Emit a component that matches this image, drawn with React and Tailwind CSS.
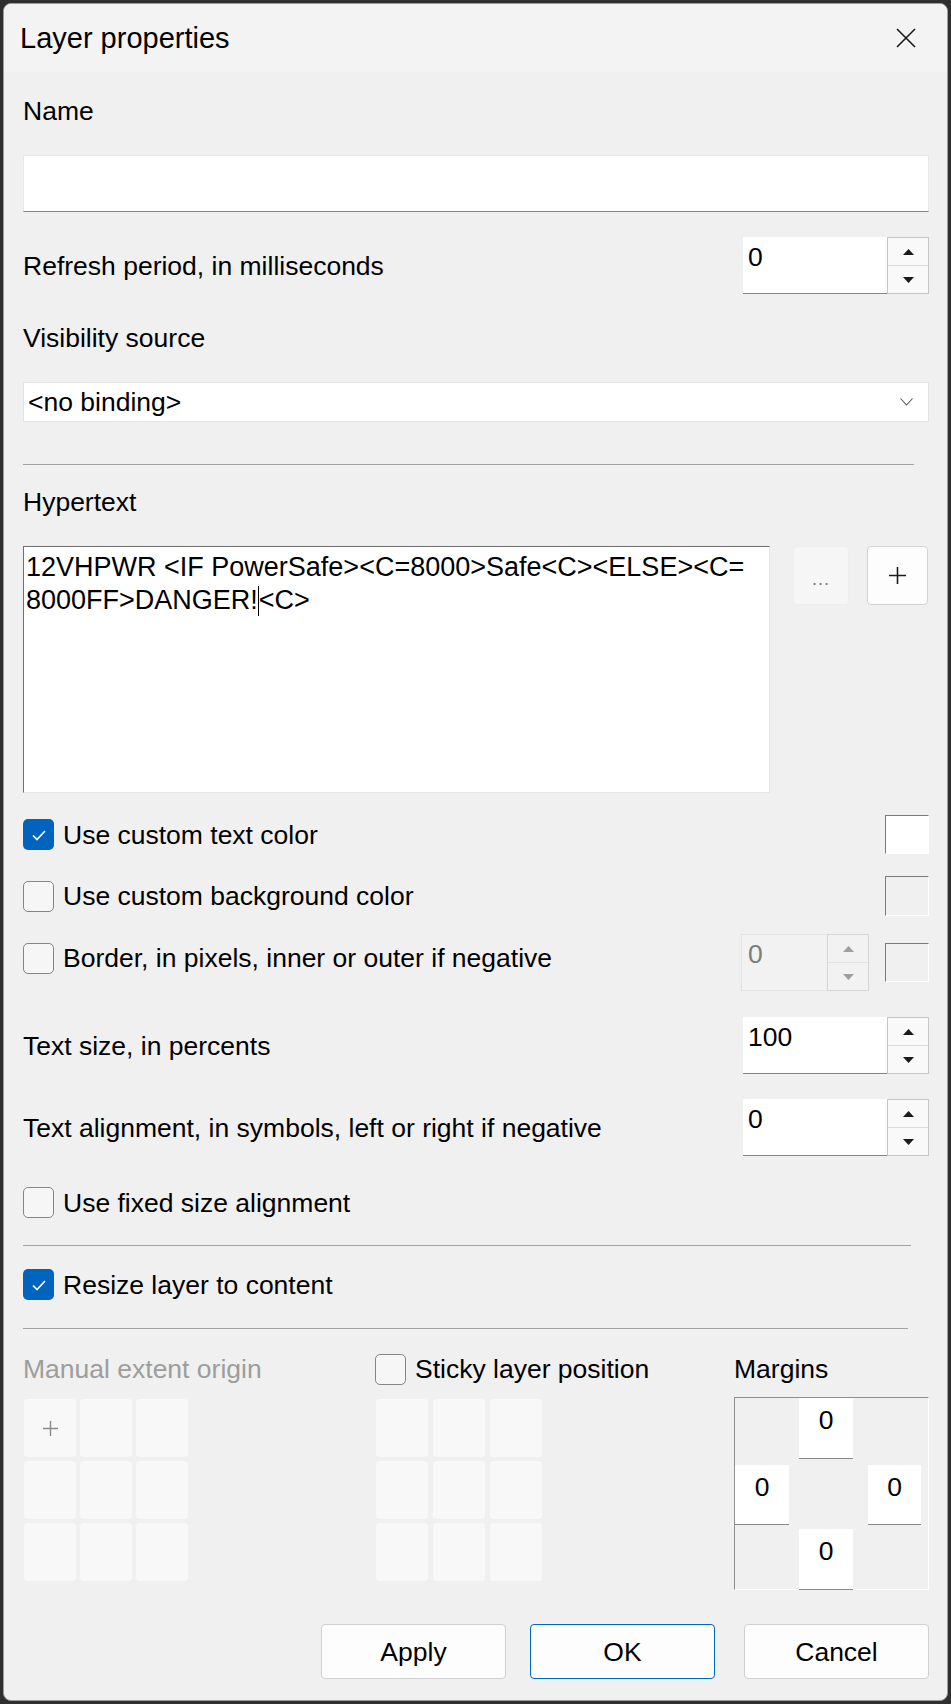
import React from 'react';

const Tri = ({ down, color = '#1a1a1a' }) => (
  <svg width="11" height="6" viewBox="0 0 11 6">
    <path d={down ? 'M0 0h11L5.5 6z' : 'M0 6h11L5.5 0z'} fill={color} />
  </svg>
);

const Spin = ({ value, disabled, inputW = 144 }) => (
  <div className="flex h-[57px]">
    <div
      style={{ width: inputW }}
      className={
        disabled
          ? 'pl-[6px] pt-[3px] leading-[32px] bg-[#f2f2f2] border border-[#e3e3e3] border-r-0 text-[#7d7d7d]'
          : 'pl-[5px] pt-[4px] leading-[32px] bg-white border-b border-[#868686]'
      }
    >
      {value}
    </div>
    <div className={`w-[42px] flex flex-col border ${disabled ? 'border-[#d6d6d6]' : 'border-[#c6c6c6]'}`}>
      <div className={`flex-1 flex items-center justify-center border-b ${disabled ? 'bg-[#f2f2f2] border-[#e2e2e2]' : 'bg-[#f9f9f9] border-[#dadada]'}`}>
        <Tri color={disabled ? '#9e9e9e' : '#1a1a1a'} />
      </div>
      <div className={`flex-1 flex items-center justify-center ${disabled ? 'bg-[#f2f2f2]' : 'bg-[#f9f9f9]'}`}>
        <Tri down color={disabled ? '#9e9e9e' : '#1a1a1a'} />
      </div>
    </div>
  </div>
);

const Check = ({ checked }) =>
  checked ? (
    <div className="w-[31px] h-[31px] shrink-0 rounded-[5px] bg-[#0063bd] flex items-center justify-center">
      <svg width="16" height="12" viewBox="0 0 16 12">
        <path d="M2 6.5l4 4L14 2" fill="none" stroke="white" strokeWidth="1.6" />
      </svg>
    </div>
  ) : (
    <div className="w-[31px] h-[31px] shrink-0 rounded-[5px] border border-[#858585] bg-[#f6f6f6]" />
  );

const CheckRow = ({ checked, label, className = '' }) => (
  <div className={`flex items-center gap-[9px] ${className}`}>
    <Check checked={checked} />
    <span className="leading-[32px]">{label}</span>
  </div>
);

const Swatch = ({ white, h = 39 }) => (
  <div
    style={{ height: h }}
    className={`w-[44px] border-t border-l border-[#7a7a7a] border-b border-r border-b-white border-r-white ${white ? 'bg-white' : 'bg-[#f0f0f0]'}`}
  />
);

const Cell = ({ children }) => (
  <div className="w-[52px] h-[58px] rounded-[4px] bg-[#f8f8f8] flex items-center justify-center text-[#8a8a8a]">
    {children}
  </div>
);

const MarginBox = () => (
  <div className="w-[54px] h-[61px] bg-white border-b border-[#8a8a8a] text-center pt-[6px] leading-[32px]">0</div>
);

export default function App() {
  return (
    <div className="w-[951px] h-[1704px] bg-[#2f2f2f] p-[3px] font-['Liberation_Sans',Arial,sans-serif] text-[26.5px] text-black">
      <div className="h-[1698px] rounded-[8px] border border-[#9c9c9c] bg-[#f0f0f0] overflow-hidden flex flex-col">
        {/* title bar */}
        <div className="h-[68px] shrink-0 bg-[#f3f3f3] flex items-center justify-between pl-[16px] pr-[31px]">
          <span className="text-[29px] leading-[36px]">Layer properties</span>
          <svg width="20" height="20" viewBox="0 0 20 20">
            <path d="M1 1l18 18M19 1L1 19" stroke="#1a1a1a" strokeWidth="1.6" />
          </svg>
        </div>

        <div className="flex-1 pl-[19px] pr-[18px] pt-[23px] flex flex-col">
          <div className="leading-[32px]">Name</div>
          <div className="mt-[28px] h-[57px] bg-white border border-[#e6e6e6] border-b-[#868686]" />

          <div className="mt-[25px] flex items-center justify-between">
            <span className="leading-[32px]">Refresh period, in milliseconds</span>
            <Spin value="0" />
          </div>

          <div className="mt-[28px] leading-[32px]">Visibility source</div>
          <div className="mt-[28px] h-[40px] bg-white border border-[#e3e3e3] flex items-center justify-between pl-[4px] pr-[15px]">
            <span className="leading-[32px]">&lt;no binding&gt;</span>
            <svg width="13" height="8" viewBox="0 0 13 8">
              <path d="M0.5 0.5l6 6.5 6-6.5" fill="none" stroke="#555" strokeWidth="1.1" />
            </svg>
          </div>

          <div className="mt-[42px] h-px bg-[#a3a3a3] mr-[15px]" />

          <div className="mt-[21px] leading-[32px]">Hypertext</div>
          <div className="mt-[28px] flex">
            <div className="w-[747px] h-[247px] bg-white border-t border-l border-[#6f6f6f] border-r border-b border-r-[#e6e6e6] border-b-[#e6e6e6] pl-[2px] pt-[4px] text-[27px] leading-[33px]">
              <div>12VHPWR &lt;IF PowerSafe&gt;&lt;C=8000&gt;Safe&lt;C&gt;&lt;ELSE&gt;&lt;C=</div>
              <div className="flex items-center">
                <span>8000FF&gt;DANGER!</span>
                <span className="w-px h-[30px] bg-black" />
                <span>&lt;C&gt;</span>
              </div>
            </div>
            <div className="ml-[23px] w-[56px] h-[59px] rounded-[4px] bg-[#f6f6f6] border border-[#eeeeee] flex items-end justify-center pb-[16px]">
              <span className="text-[18px] leading-[18px] text-[#7a7a7a] tracking-[1px]">...</span>
            </div>
            <div className="ml-[18px] w-[61px] h-[59px] rounded-[4px] bg-[#fdfdfd] border border-[#d3d3d3] flex items-center justify-center">
              <svg width="17" height="17" viewBox="0 0 17 17">
                <path d="M8.5 0v17M0 8.5h17" stroke="#1a1a1a" strokeWidth="1.6" />
              </svg>
            </div>
          </div>

          <div className="mt-[22px] h-[39px] flex items-center justify-between">
            <CheckRow checked label="Use custom text color" />
            <Swatch white />
          </div>
          <div className="mt-[22px] h-[40px] flex items-center justify-between">
            <CheckRow label="Use custom background color" />
            <Swatch h={40} />
          </div>
          <div className="mt-[18px] h-[57px] flex items-center justify-between">
            <CheckRow label="Border, in pixels, inner or outer if negative" className="mb-[9px]" />
            <div className="flex items-center gap-[16px]">
              <Spin value="0" disabled inputW={86} />
              <Swatch />
            </div>
          </div>

          <div className="mt-[26px] flex items-center justify-between">
            <span className="leading-[32px]">Text size, in percents</span>
            <Spin value="100" />
          </div>
          <div className="mt-[25px] flex items-center justify-between">
            <span className="leading-[32px]">Text alignment, in symbols, left or right if negative</span>
            <Spin value="0" />
          </div>

          <div className="mt-[31px] h-[31px] flex items-center">
            <CheckRow label="Use fixed size alignment" />
          </div>
          <div className="mt-[27px] h-px bg-[#a3a3a3] mr-[18px]" />
          <div className="mt-[23px] h-[31px] flex items-center">
            <CheckRow checked label="Resize layer to content" />
          </div>
          <div className="mt-[28px] h-px bg-[#a3a3a3] mr-[21px]" />

          <div className="mt-[24px] flex">
            <div className="w-[352px]">
              <div className="h-[32px] leading-[32px] text-[#9d9d9d]">Manual extent origin</div>
              <div className="mt-[14px] ml-px grid grid-cols-[52px_52px_52px] gap-[4px]">
                <Cell>
                  <svg width="15" height="15" viewBox="0 0 15 15">
                    <path d="M7.5 0v15M0 7.5h15" stroke="#8a8a8a" strokeWidth="1.4" />
                  </svg>
                </Cell>
                <Cell /><Cell /><Cell /><Cell /><Cell /><Cell /><Cell /><Cell />
              </div>
            </div>
            <div className="w-[359px]">
              <div className="h-[32px] flex items-center">
                <CheckRow label="Sticky layer position" />
              </div>
              <div className="mt-[14px] ml-px grid grid-cols-[52px_52px_52px] gap-x-[5px] gap-y-[4px]">
                <Cell /><Cell /><Cell /><Cell /><Cell /><Cell /><Cell /><Cell /><Cell />
              </div>
            </div>
            <div>
              <div className="h-[32px] leading-[32px]">Margins</div>
              <div className="mt-[12px] w-[195px] h-[193px] border-t border-l border-[#8f8f8f] border-r border-b border-r-white border-b-white flex flex-col">
                <div className="ml-[64px]"><MarginBox /></div>
                <div className="mt-[6px] flex h-[60px]">
                  <div className="w-[54px] h-[60px] bg-white border-b border-[#8a8a8a] text-center pt-[6px] leading-[32px]">0</div>
                  <div className="ml-[79px] w-[53px] h-[60px] bg-white border-b border-[#8a8a8a] text-center pt-[6px] leading-[32px]">0</div>
                </div>
                <div className="mt-[4px] ml-[64px]"><MarginBox /></div>
              </div>
            </div>
          </div>

          <div className="mt-[34px] flex justify-end">
            <button className="w-[185px] h-[55px] rounded-[4px] bg-[#fdfdfd] border border-[#d0d0d0] leading-[32px]">Apply</button>
            <button className="ml-[24px] w-[185px] h-[55px] rounded-[4px] bg-[#fdfdfd] border border-[#0067c0] leading-[32px]">OK</button>
            <button className="ml-[29px] w-[185px] h-[55px] rounded-[4px] bg-[#fdfdfd] border border-[#d0d0d0] leading-[32px]">Cancel</button>
          </div>
        </div>
      </div>
    </div>
  );
}
